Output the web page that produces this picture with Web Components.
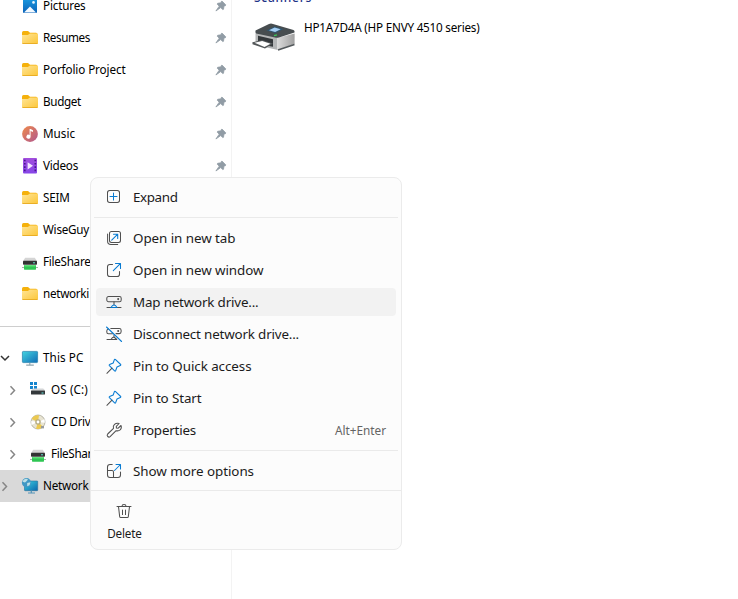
<!DOCTYPE html>
<html lang="en"><head><meta charset="utf-8"><title>File Explorer</title>
<style>html,body{margin:0;height:100%;overflow:hidden;background:#fff}body{font-family:"Noto Sans","Open Sans",sans-serif}</style>
</head><body><explorer-window></explorer-window>
<script>
const ICONS={
pictures:`<defs><linearGradient id="g" x2="0" y2="1"><stop stop-color="#1b9be0"/><stop offset="1" stop-color="#0b62b8"/></linearGradient></defs><rect x="1" y="0" width="14" height="15" rx="1" fill="url(#g)"/><circle cx="11.5" cy="4.4" r="1.3" fill="#e8f6ff"/><path d="M2 14.5 8 8.5l6 6z" fill="#f4faff"/>`,
folder:`<defs><linearGradient id="g" x2="1" y2="1"><stop stop-color="#ffe597"/><stop offset="1" stop-color="#fcc73a"/></linearGradient></defs><path d="M0 2.7Q0 1 1.5 1H6L8 2.7h6q1 0 1 1v9H0z" fill="#f5b10c"/><path d="M0 5h5.8L8 3.4h8v9.4q0 .9-.9.9H.9q-.9 0-.9-.9z" fill="url(#g)"/><path d="M.4 13.5h15.2" stroke="#e8a91c" stroke-width=".9"/>`,
music:`<defs><linearGradient id="g" x2="1" y2="1"><stop stop-color="#f08a4a"/><stop offset="1" stop-color="#b0588f"/></linearGradient></defs><circle cx="8" cy="8" r="7.9" fill="url(#g)"/><path d="M7.6 3h1l2.4 1.3v1.6L8.6 5v5.7a2.1 2 0 1 1-1-1.7z" fill="#fff"/>`,
videos:`<defs><linearGradient id="g" x2="0" y2="1"><stop stop-color="#a24fdd"/><stop offset="1" stop-color="#8646e8"/></linearGradient></defs><rect x="1" y="0" width="14" height="15.6" rx="1" fill="url(#g)"/><path d="M2 2.5h1.6m-1.6 3.3h1.6m-1.6 3.3h1.6m-1.6 3.3h1.6M12.5 2.5h1.6m-1.6 3.3h1.6m-1.6 3.3h1.6m-1.6 3.3h1.6" stroke="#48168c" stroke-width="1.6"/><path d="M5.6 4.2 11 7.8l-5.4 3.7z" fill="#f3e5ff"/>`,
share:`<g transform="translate(0 1.8)"><path d="M3.2 2h9.6L15 5.3H1z" fill="#d5d5d5"/><rect x="1" y="5" width="14" height="4" rx=".8" fill="#333"/><path d="M11 7h2" stroke="#5fe1cf"/><path d="M0 11.7h16" stroke="#a8b2aa"/><rect x="2" y="9.2" width="12" height="4.7" rx=".6" fill="#2fc653"/><path d="M2.5 10h11" stroke="#77ee8c"/></g>`,
pc:`<defs><linearGradient id="g" x2="1" y2="1"><stop stop-color="#42d3df"/><stop offset="1" stop-color="#126cb7"/></linearGradient></defs><rect x=".4" y="1.4" width="15.2" height="11.2" rx=".8" fill="url(#g)" stroke="#237fac" stroke-width=".7"/><path d="M7.8 13v2M4.2 15.2h7.6" stroke="#8fa5af" stroke-width="1.2"/>`,
os:`<path d="M0 0h3v3H0zm4 0h3v3H4zM0 4h3v3H0zm4 0h3v3H4z" fill="#1685ce"/><path d="M2.8 6.5h10.4l2 2H1z" fill="#d4d6d7"/><rect x="1" y="8.4" width="14" height="4.2" rx=".5" fill="#34383b"/><path d="M11.5 11h2" stroke="#65e6df"/>`,
cd:`<circle cx="8" cy="8" r="7" fill="#e8e4d2" stroke="#aaa899" stroke-width=".8"/><path d="M8 8 1.6 5A7 7 0 0 1 9 1.3zM8 8l5 4.8a7 7 0 0 1-7 1.9z" fill="#ecc94f"/><path d="M8 8 1.3 7v4zM8 8l6.6-2.7.2 3.5z" fill="#fff"/><circle cx="8" cy="8" r="2.8" fill="#b6ad85"/><circle cx="8" cy="8" r="1.4" fill="#fff"/><path d="M11 12h3v2.4h-3z" fill="#999b9b"/>`,
network:`<defs><linearGradient id="g" x2="1" y2="1"><stop stop-color="#3ed2df"/><stop offset="1" stop-color="#0966ae"/></linearGradient></defs><rect x="2.5" y="3" width="13.2" height="9.7" rx=".6" fill="url(#g)" stroke="#286e9a" stroke-width=".6"/><path d="M9.3 12.5v2.2M6 15h7" stroke="#5394b7" stroke-width="1.2"/><circle cx="4.5" cy="4.7" r="4.6" fill="#4198c4"/><path d="M1.3 2.3Q4-.2 6 1.5L4.5 3.2 3 4.4.6 3.8zM5.2 5l3.3-.8-1 3-2.3 1z" fill="#bde0e7"/>`,
pinned:`<path d="M6.8.8 10.6 4.6 10.2 5.4 8.8 5.6 8.3 9 7.5 9.3 5.5 7.3.7 10.7 4 5.9 2 3.8 2.5 3 5.9 2.5 6.2 1.1z" transform="translate(.2 .3)" fill="#919ca5" stroke="#919ca5" stroke-width=".8" stroke-linejoin="round"/>`,
down:`<path d="M1 3l4 4 4-4" fill="none" stroke="#333" stroke-width="1.5"/>`,
right:`<path d="M2.5 1.3 6.5 5.5 2.5 9.7" fill="none" stroke="#868686" stroke-width="1.5"/>`,
expand:`<rect x="1.5" y="1.5" width="12" height="12" rx="2.2"/><path class="b" d="M7.5 4v7M4 7.5h7"/>`,
tab:`<rect x="3.5" y="1.5" width="11" height="11" rx="2"/><path d="M1.6 4v7.2q0 3.3 3.3 3.3h6.8"/><path class="b" d="m5.7 10.2 6-6M7.5 4.2h4.2v4.2"/>`,
window:`<path d="M6.5 2.5H3.8q-2.3 0-2.3 2.3v7.4q0 2.3 2.3 2.3h7.4q2.3 0 2.3-2.3V9.5"/><path class="b" d="m7.3 8.7 7-7M9.5 1.5h5v5"/>`,
map:`<rect x=".8" y="2.5" width="14.4" height="5.2" rx="1.7"/><circle cx="12.2" cy="5.1" r=".5"/><path d="M8 7.8v3M1 13.5h4m6 0h4"/><path class="b" d="M5 13.5h6l-1.3-1.7L8 10.9l-1.7.9z"/>`,
disconnect:`<path d="M4.8 2.5h8.5q1.8 0 1.8 1.8v1.5q0 1.8-1.8 1.8H10M2.3 3Q.8 3.5.8 5v1q0 1.7 1.7 1.7h4M8 9v2M1 13.5h4m0 0 1.3-1.7L8 11l2.8 2.5H5"/><circle cx="12.2" cy="5" r=".5"/><path class="b" d="M.5 1 15.6 15.5"/>`,
pin:`<path class="b" d="m9.3 1.3 5.4 5.2q.3.7-.4 1L11 9l-1.4 3.8q-.4.7-1 .1L3.4 7.6q-.5-.6.2-1L7.2 5l1.2-3.4q.4-.7.9-.3z"/><path d="M6 10.2.9 15.3"/>`,
wrench:`<path d="M13.1 1.5 10.3 4.3l.1 1.8 1.8.1 2.8-2.7q1 2.7-.9 4.4-1.7 1.4-4 .8l-6 6q-1.2.9-2.4-.2-1.1-1.3 0-2.5l5.8-5.6Q6.7 4 8.5 2.4q2-1.7 4.6-.9z"/>`,
more:`<path d="M6.2 1.5H4Q1.5 1.5 1.5 4v8Q1.5 14.5 4 14.5h8q2.5 0 2.5-2.5V9M1.5 7.5H6Q7.5 7.5 7.5 9v5.5"/><path class="b" d="m8.5 7.5 6-6M10 1.5h4.5V6"/>`,
trash:`<path d="M1 3.5h14M6 3.3q0-1.8 2-1.8t2 1.8M2.5 3.7l1.2 10q.1.8 1 .8h6.6q.9 0 1-.8l1.2-10M6.5 7v4.5m3-4.5v4.5"/>`,
printer:`<defs><linearGradient id="g"><stop stop-color="#dcdcdc"/><stop offset="1" stop-color="#a0a0a0"/></linearGradient></defs><path d="M3.5 9.5 26 14.5V27L3.5 22z" fill="#b4b6b7"/><path d="m25 15 17.6-4.5V21L26 27l-1 0z" fill="url(#g)"/><path d="M3.5 7.5 17 .9q2-.6 4 0l20.5 6q1.5.6 1 2.6L27 14.4q-2 .5-4 0L4.2 10.4q-1.2-.6-.7-2.9z" fill="#474d50"/><path d="m14.5 7.4 8-4 9 2.6-8 4.3z" fill="#31556e"/><path d="m17 7.2 5.6-2.7 6 1.7-5.5 2.9z" fill="#a5cff4"/><path d="m22 12.7 3-.8" stroke="#39c757" stroke-width="1.3"/><path d="m6 12.8 15 3.5v7.4L6 21z" fill="#34383b"/><path d="M.4 19.3 10 17l11 3.6-8 4.9L.5 21.3z" fill="#54585a"/><path d="m2.5 19.7 7.7-1.7 8.3 2.8-6 3.3z" fill="#fff"/><path d="m26 27 16.5-5.5" stroke="#52575a" stroke-width="1.5"/>`
};
class UiIcon extends HTMLElement{
connectedCallback(){
const n=this.getAttribute('name'),w=+this.getAttribute('w')||16,h=+this.getAttribute('h')||w;
this.attachShadow({mode:'open'}).innerHTML=`<style>:host{display:block;flex:none;width:${w}px;height:${h}px}svg{display:block;overflow:visible}.line{fill:none;stroke:#505050;stroke-width:1.05;stroke-linejoin:round;stroke-linecap:round}.b{stroke:#087bd2}</style><svg width="${w}" height="${h}" viewBox="0 0 ${w} ${h}"><g class="${this.hasAttribute('line')?'line':''}">${ICONS[n]}</g></svg>`;
}}
customElements.define('ui-icon',UiIcon);
/* Single-line label whose tracking is adjusted to the requested width. */
class UiLabel extends HTMLElement{
connectedCallback(){
this.attachShadow({mode:'open'}).innerHTML=`<style>:host{display:block;flex:none;white-space:nowrap;line-height:20px}span{display:inline-block}</style><span></span>`;
const s=this.shadowRoot.querySelector('span');s.textContent=this.getAttribute('text');
const t=+this.getAttribute('fit');
if(t){const w=s.getBoundingClientRect().width;s.style.letterSpacing=((t-w)/s.textContent.length)+'px';}
}}
customElements.define('ui-label',UiLabel);
class NavItem extends HTMLElement{
connectedCallback(){
const a=k=>this.getAttribute(k),child=this.hasAttribute('child');
this.attachShadow({mode:'open'}).innerHTML=`<style>:host{display:flex;align-items:center;height:32px;box-sizing:border-box;padding-right:4px;font-size:11.7px;color:#000}
:host([selected]){background:#d9d9d9}.arrow{width:${child?30:22}px;padding-left:${child?8:0}px;box-sizing:border-box;flex:none}ui-label{margin-left:5px;flex:1;padding-bottom:2px}
</style><div class="arrow">${a('arrow')?`<ui-icon name="${a('arrow')}" w="10" h="11"></ui-icon>`:''}</div><ui-icon name="${a('icon')}"></ui-icon><ui-label text="${a('text')}" fit="${a('fit')}"></ui-label>${this.hasAttribute('pinned')?'<ui-icon name="pinned" w="12"  h="12"></ui-icon>':''}`;
}}
customElements.define('nav-item',NavItem);
class NavPane extends HTMLElement{
connectedCallback(){
this.attachShadow({mode:'open'}).innerHTML=`<style>:host{display:block;width:232px;flex:none;box-sizing:border-box;border-right:1px solid #f3f3f3;overflow:hidden}.list{margin-top:-10px}hr{border:0;height:1px;background:#cecece;margin:16px 0 15px}</style>
<div class="list"><nav-item icon="pictures" text="Pictures" fit="42.5" pinned></nav-item><nav-item icon="folder" text="Resumes" fit="47" pinned></nav-item><nav-item icon="folder" text="Porfolio Project" fit="82.5" pinned></nav-item><nav-item icon="folder" text="Budget" fit="38" pinned></nav-item><nav-item icon="music" text="Music" fit="32" pinned></nav-item><nav-item icon="videos" text="Videos" fit="35" pinned></nav-item><nav-item icon="folder" text="SEIM" fit="26.5"></nav-item><nav-item icon="folder" text="WiseGuy" fit="46"></nav-item><nav-item icon="share" text="FileShare" fit="47.5"></nav-item><nav-item icon="folder" text="networki" fit="46"></nav-item><hr>
<nav-item icon="pc" text="This PC" fit="40.5" arrow="down"></nav-item><nav-item child icon="os" text="OS (C:)" fit="37" arrow="right"></nav-item><nav-item child icon="cd" text="CD Driv" fit="39.5" arrow="right"></nav-item><nav-item child icon="share" text="FileShar" fit="41" arrow="right"></nav-item><nav-item selected icon="network" text="Network" fit="45.5" arrow="right"></nav-item></div>`;
}}
customElements.define('nav-pane',NavPane);
class DeviceView extends HTMLElement{
connectedCallback(){
this.attachShadow({mode:'open'}).innerHTML=`<style>:host{display:block;flex:1;padding-left:20px;font-size:11.7px}.heading{height:4px;display:flex;align-items:flex-end;color:#1e3287;font-size:12px;font-weight:500;padding-left:2px}.heading ui-label{margin-bottom:-4px}.device{display:flex;margin-top:13px}.device ui-label{margin-left:8px}.device ui-icon{margin-top:6px}</style><div class="heading"><ui-label text="Scanners" fit="58"></ui-label></div><div class="device"><ui-icon name="printer" w="44" h="29"></ui-icon><ui-label text="HP1A7D4A (HP ENVY 4510 series)" fit="175.5"></ui-label></div>`;
}}
customElements.define('device-view',DeviceView);
class MenuItem extends HTMLElement{
connectedCallback(){
const a=k=>this.getAttribute(k);
this.attachShadow({mode:'open'}).innerHTML=`<style>:host{display:block;padding:2px 5px;color:#1b1b1b;font-size:13.4px}.row{height:28px;display:flex;align-items:center;padding:0 10px;border-radius:4px}:host([active]) .row{background:#f2f2f2}.main{margin-left:11px}.key{margin-left:auto;font-size:11.8px;color:#646464}</style><div class="row"><ui-icon line name="${a('icon')}"></ui-icon><ui-label class="main" text="${a('text')}" fit="${a('fit')}"></ui-label><slot></slot>${a('key')?`<ui-label class="key" text="${a('key')}" fit="51"></ui-label>`:''}</div>`;
}}
customElements.define('menu-item',MenuItem);
class ContextMenu extends HTMLElement{
connectedCallback(){
this.attachShadow({mode:'open'}).innerHTML=`<style>:host{display:block;box-sizing:border-box;width:312px;height:373px;background:#fcfcfc;border:1px solid #ebebeb;border-radius:8px;padding-top:3px;overflow:hidden}hr{height:1px;border:0;background:#eaeaea;margin:4px 3px}hr.full{margin:3px 0 0}.delete{display:flex;flex-direction:column;align-items:center;width:66px;padding-top:12px;font-size:11.7px;color:#1b1b1b}.delete ui-label{margin:4px 0 0 1px}</style>
<menu-item icon="expand" text="Expand" fit="44.5"></menu-item><hr><menu-item icon="tab" text="Open in new tab" fit="102.5"></menu-item><menu-item icon="window" text="Open in new window" fit="130.5"></menu-item><menu-item active icon="map" text="Map network drive..." fit="125.5"></menu-item><menu-item icon="disconnect" text="Disconnect network drive..." fit="166"></menu-item><menu-item icon="pin" text="Pin to Quick access" fit="118.5"></menu-item><menu-item icon="pin" text="Pin to Start" fit="68.5"></menu-item><menu-item icon="wrench" text="Properties" fit="63" key="Alt+Enter"></menu-item><hr><menu-item icon="more" text="Show more options" fit="121"></menu-item><hr class="full"><div class="delete"><ui-icon line name="trash"></ui-icon><ui-label text="Delete" fit="34.5"></ui-label></div>`;
}}
customElements.define('context-menu',ContextMenu);
class ExplorerWindow extends HTMLElement{
connectedCallback(){
this.attachShadow({mode:'open'}).innerHTML=`<style>:host{display:flex;position:relative;width:738px;height:599px;overflow:hidden;background:#fff}context-menu{position:absolute;left:90px;top:177px}</style><nav-pane></nav-pane><device-view></device-view><context-menu></context-menu>`;
}}
customElements.define('explorer-window',ExplorerWindow);
</script></body></html>
